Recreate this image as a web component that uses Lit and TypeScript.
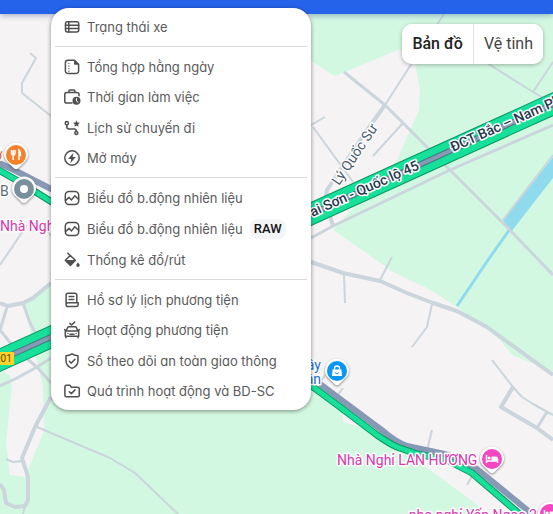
import { LitElement, html, css, svg } from "lit";
import { customElement, state } from "lit/decorators.js";
import { classMap } from "lit/directives/class-map.js";

type Item = { icon: string; label: string; badge?: string; tall?: boolean };

const GROUPS: Item[][] = [
  [{ icon: "table", label: "Trạng thái xe" }],
  [
    { icon: "report", label: "Tổng hợp hằng ngày" },
    { icon: "work", label: "Thời gian làm việc" },
    { icon: "route", label: "Lịch sử chuyến đi", tall: true },
    { icon: "engine", label: "Mở máy" },
  ],
  [
    { icon: "chart", label: "Biểu đồ b.động nhiên liệu" },
    { icon: "chart", label: "Biểu đồ b.động nhiên liệu", badge: "RAW" },
    { icon: "fill", label: "Thống kê đổ/rút" },
  ],
  [
    { icon: "profile", label: "Hồ sơ lý lịch phương tiện" },
    { icon: "car", label: "Hoạt động phương tiện" },
    { icon: "shield", label: "Sổ theo dõi an toàn giao thông", tall: true },
    { icon: "folder", label: "Quá trình hoạt động và BD-SC" },
  ],
];

const ICONS: Record<string, unknown> = {
  table: svg`<rect x="1.5" y="2.7" width="13.2" height="10.4" rx="2"/><path d="M1.5 6.2h13.2M1.5 9.6h13.2M4.8 2.7v10.4"/>`,
  report: svg`<path d="M10.5 1.2H4a2.600 2.600 0 0 0-2.600 2.600v8.200A2.600 2.600 0 0 0 4 14.600h8a2.600 2.600 0 0 0 2.600-2.600V5.200z"/><path class="solid" d="M10 1v3.400c0 .8.5 1.300 1.300 1.300h3.400z"/><path d="M4.900 4.300v8" stroke-width="1.200" stroke-dasharray=".2 2.400"/>`,
  work: svg`<path d="M8 14.1H2.6A1.8 1.8 0 0 1 .8 12.3V5.4a1.8 1.8 0 0 1 1.8-1.8h10.600A1.8 1.8 0 0 1 15 5.400v1.400M5 3.500V1.800c0-.5.3-.9.9-.9h4c.6 0 .9.4.9.9v1.700"/><circle class="solid" cx="12.500" cy="11.800" r="4"/><path class="cut" d="M12.400 9.500v2.600l1.700 1.200"/>`,
  route: svg`<circle cx="2.8" cy="3.2" r="1.6"/><circle cx="12.3" cy="13.1" r="1.5"/><path d="M2.8 4.9v1.900c0 1.500.8 2.100 2.200 2.100h5.200c1.400 0 2.100.7 2.100 2.500"/><path class="solid" d="m12.500.3 1 2.200 2.400.3-1.800 1.600.5 2.400-2.100-1.200-2.100 1.200.5-2.400-1.800-1.600 2.400-.3z"/>`,
  engine: svg`<circle cx="8" cy="8" r="7.2"/><path class="solid" d="M9.4 2.8 4.2 8.900h3l-.8 4.300 5.300-6.300H8.600z"/>`,
  chart: svg`<rect x="1.3" y="1.5" width="13.4" height="13" rx="3.7"/><path d="m1.700 10.400 3.400-3 2.400 2.500 3.300-4.200 3.700 3.500"/>`,
  fill: svg`<path d="m3.800 1.200 7.600 7.100-5 5.100-5.100-5.100 5-4.800"/><path class="solid" d="M1.300 8.100h10.300l-5.200 5.600zM14 10.600s-1.700 1.500-1.700 2.700a1.700 1.700 0 0 0 3.400 0c0-1.200-1.700-2.700-1.700-2.700z"/>`,
  profile: svg`<path d="M4.500 10.800h9.700v1.500a2.300 2.300 0 0 1-2.300 2.300H4.300A2.200 2.200 0 0 1 2.100 12.400V3.200C2.100 2 3 1.200 4.200 1.200h6.500c1.300 0 2.100.8 2.100 2v7.600M2.100 12.200c0-.9.9-1.400 2.400-1.400M5.100 4.500h4.700M5.100 7.600h4.700"/>`,
  car: svg`<path d="m5.900 1.400 1.700 1.600L10.700.1M2 9l1.500-3.300c.3-.7.7-1 1.500-1h6c.8 0 1.200.3 1.500 1L14 9M1.300 9h13.400v5.300H1.300zM1.900 14.300v1.500M14.100 14.300v1.500M.6 7.600l1.400 1M15.400 7.600l-1.400 1M6 12.300h4"/><circle class="solid" cx="3.900" cy="11.400" r=".7"/><circle class="solid" cx="12.100" cy="11.400" r=".7"/>`,
  shield: svg`<path d="M8 .8c1.800 1.300 3.900 1.900 6 1.900v5c0 4-2.600 6.300-6 7.700-3.400-1.400-6-3.700-6-7.700v-5c2.100 0 4.200-.6 6-1.900z"/><path d="m5.300 8.200 2 1.900L11 6.300"/>`,
  folder: svg`<path d="M.9 12.300V3.700c0-.9.5-1.500 1.500-1.500h3.400l1.700 2h6.200c1 0 1.600.6 1.600 1.500v6.600c0 1-.6 1.500-1.600 1.500H2.400c-1 0-1.500-.5-1.500-1.500z"/><path d="m5.300 8.700 2 1.900 3.700-3.700"/>`,
};

@customElement("menu-icon")
class MenuIcon extends LitElement {
  static properties = { name: { type: String } };
  declare name: string;
  static styles = css`
    :host { display: block; flex: none; width: 16px; height: 16px; }
    svg { display: block; width: 16px; height: 16px; overflow: visible; fill: none; stroke: #4f4f4f; stroke-width: 1.5; stroke-linecap: round; stroke-linejoin: round; }
    .solid { fill: #4f4f4f; stroke: none; }
    .cut { stroke: #fff; stroke-width: 1; }
  `;
  render() {
    return html`<svg viewBox="0 0 16 16" aria-hidden="true">${ICONS[this.name]}</svg>`;
  }
}

@customElement("report-menu")
class ReportMenu extends LitElement {
  static styles = css`
    :host { display: block; box-sizing: border-box; width: 260px; padding: 4px; border-radius: 18px; background: #fff; box-shadow: 0 1px 4px rgba(0, 0, 0, 0.45); }
    ul { list-style: none; margin: 0; padding: 0; }
    .group + .group { margin-top: 4px; padding-top: 5px; border-top: 1px solid #d9d9dc; }
    .item { display: flex; align-items: center; gap: 7px; width: 100%; height: 30px; margin: 0; padding: 0 9px; border: 0; border-radius: 8px; background: none; color: #5a5a5a; font: 400 13px/20px Inter, "Noto Sans", sans-serif; font-feature-settings: "cv11", "ss03"; text-align: left; white-space: nowrap; cursor: pointer; }
    .item:hover { background: #f3f4f6; }
    .tall { height: 31px; }
    .badged { height: 32px; }
    .badge { padding: 0 4px; border-radius: 8px; background: #f3f4f6; color: #111; font: 500 13px/20px Roboto, sans-serif; }
  `;
  render() {
    return html`<nav aria-label="Báo cáo">
      ${GROUPS.map(
        (group) => html`<ul class="group">
          ${group.map(
            (i) => html`<li>
              <button class=${classMap({ item: true, tall: !!i.tall, badged: !!i.badge })}>
                <menu-icon .name=${i.icon}></menu-icon><span>${i.label}</span>${i.badge ? html`<span class="badge">${i.badge}</span>` : null}
              </button>
            </li>`
          )}
        </ul>`
      )}
    </nav>`;
  }
}

const pin = (x: number, y: number, color: string, glyph: unknown) => svg`
  <g transform="translate(${x} ${y})">
    <path class="pin" d="M0-12.500a12 12 0 0 1 12 12C12 6 6 8.500 2.500 13Q0 15.500-2.500 13C-6 8.500-12 6-12-.5a12 12 0 0 1 12-12z"/>
    <circle r="10" fill=${color}/>${glyph}
  </g>`;

const bed = svg`<path d="M-5.500-4v8M-5.500 2h11M5.500 4V0" fill="none" stroke="#fff" stroke-width="1.500"/><circle cx="-2.900" cy="-.9" r="1.500" fill="#fff"/><path d="M-.5-2.500h4.500a2 2 0 0 1 2 2V2H-.5z" fill="#fff"/>`;

@customElement("street-map")
class StreetMap extends LitElement {
  static styles = css`
    :host { display: block; overflow: hidden; }
    svg { display: block; width: 100%; height: 100%; }
    .land { fill: #f5f3f4; }
    .park { fill: #d3f8e2; }
    .water { fill: #90daee; }
    .stream { fill: none; stroke: #90daee; stroke-width: 3; }
    .road { fill: none; stroke: #cad5dc; stroke-linejoin: round; }
    .w2 { stroke-width: 2; }
    .w3 { stroke-width: 3; }
    .w4 { stroke-width: 4; }
    .edge, .flow, .median, .lane { fill: none; stroke-linejoin: round; }
    .edge { stroke: #0a9963; }
    .flow { stroke: #16e09a; }
    .median { stroke: #3f7f82; stroke-width: 6; }
    .lane { stroke: #8799b4; }
    .pin { fill: #fff; filter: drop-shadow(0 1px 1px rgba(0, 0, 0, 0.45)); }
    text { font: 400 14px Roboto, sans-serif; paint-order: stroke; stroke: #fff; stroke-width: 3px; stroke-linejoin: round; }
    .highway { font-weight: 500; fill: #26384e; }
    .street { fill: #48596a; }
    .hotel { fill: #d936ad; }
    .shop { fill: #1a6dd8; }
    .food { fill: #d8641c; }
    .place { fill: #5c6c79; }
    .route { font-size: 10px; fill: #5c4500; stroke: none; }
  `;
  render() {
    return html`<svg viewBox="0 0 553 514" preserveAspectRatio="xMinYMin slice" role="img" aria-label="Bản đồ">
      <rect class="land" width="553" height="514"/>
      <path class="park" d="M311 0H553V372L512 355 500 340 457 307 427 288 393 272 362 250 333 230 397 160 419 110 420 90 415 63 400 49 335 76 311 61z"/>
      <path class="park" d="M0 370 10 375 12 385 6 443 10 475 25 477 44 431 43 387 33 343 24 303 51 283 311 380 343 407V422L380 433 430 470 490 514H0z"/>
      <path class="water" d="M553 157 503 220 511 232 553 178z"/>
      <path class="road w2" d="M553 155 503 220"/>
      <path class="stream" d="M510 229 488 260 457 306"/>
      <path class="road w2" d="M30 53 36 58 22 83V93L51 116M27 225 0 265M45 227 51 236M444 14 412 63 385 105M403 123 373 156M311 125 325 117M313 127 353 182M487 63 533 92 553 104M533 92 553 62M344 274 345 303M392 257 380 280M432 304 427 327 412 347M492 360 513 387 522 397 533 404 553 415M432 430 427 451M343 388 337 396M472 476 467 485M325 375 320 383M6 459 13 462 22 461M37 427 110 458 135 473 178 514M25 506 23 514"/>
      <path class="road w3" d="M344 72 385 105 403 123 450 170 507 227 553 275M311 238 333 226 450 170 553 125M501 407 513 387M537 428 547 412M0 386 17 378 37 367 51 358M7 307 0 330 16 350 37 367 51 383M23 303 30 323 36 334"/>
      <path class="road w4" d="M385 105 367 130 327 190 325 200 333 226M0 303 8 306 23 303 33 298 51 283M51 397 35 427 22 458 28 477V500L25 506 15 507 6 503 4 490 0 484M311 262 343 273 380 281 407 293 433 303 457 311 487 327 553 375M513 387 501 407 537 428 553 440"/>

      <path class="edge" stroke-width="22" d="M-9 364 51 337 311 214 562 100"/>
      <path class="flow" stroke-width="20" d="M-9 364 51 337 311 214 562 100"/>
      <path class="median" d="M-9 364 51 337 311 214 562 100"/>
      <path class="lane" stroke-width="4" d="M-9 364 51 337 311 214 562 100"/>

      <path class="lane" stroke-width="6" d="M-3 162 20 173 55 191M320 384 340 399 383 431Q396 442 407 446L440 453Q450 455 457 458L477 469 532 514"/>
      <path class="edge" stroke-width="7" d="M-3 169 18 181 55 204M309 384 340 407 377 435Q390 444 397 447L417 454 447 460 472 473 522 516"/>
      <path class="flow" stroke-width="5" d="M-3 169 18 181 55 204M309 384 340 407 377 435Q390 444 397 447L417 454 447 460 472 473 522 516"/>

      <rect x="-8" y="352" width="22" height="13" rx="1" fill="#ffd428"/>
      <text class="route" x="-5" y="362">901</text>
      <text class="street" transform="translate(339 186) rotate(-56)">Lý Quốc Sư</text>
      <text class="highway" text-anchor="end" transform="translate(420 169) rotate(-24)">ai Sơn - Quốc lộ 45</text>
      <text class="highway" transform="translate(453 152) rotate(-24)">ĐCT Bắc – Nam Ph</text>
      <text class="hotel" x="0" y="231">Nhà Nghỉ</text>
      <text class="place" x="0" y="196">B</text>
      <text class="food" x="-6" y="160">ở</text>
      <text class="shop" text-anchor="end" x="321" y="370">ây</text>
      <text class="shop" text-anchor="end" x="321" y="384">ân</text>
      <text class="hotel" x="337" y="465">Nhà Nghỉ LAN HƯƠNG</text>
      <text class="hotel" text-anchor="end" x="537" y="520">nho nghỉ Yến Ngọc 2</text>
      ${pin(16, 155, "#f6832b", svg`<path d="M-4.500-5v3.500q0 1.500 1.700 1.500T-1-1.500V-5M-2.800-5V5M3 5V-5Q5-3 4.500.5H3" fill="none" stroke="#fff" stroke-width="1.500"/>`)}
      ${pin(24, 189, "#78909c", svg`<circle r="4" fill="#fff"/>`)}
      ${pin(337, 371, "#0b96f5", svg`<path d="M-4.500-1.500h9L5 5H-5z" fill="#fff"/><path d="M-2.500-1v-1.500a2.500 2.500 0 0 1 5 0V-1" fill="none" stroke="#fff" stroke-width="1.300"/><path d="M-2 1.500Q0 4 2 1.500" fill="none" stroke="#0b96f5"/>`)}
      ${pin(492, 459, "#f545c0", bed)}
      ${pin(550, 514, "#f545c0", bed)}
    </svg>`;
  }
}

@customElement("app-root")
class AppRoot extends LitElement {
  static styles = css`
    :host { display: block; position: relative; height: 100vh; overflow: hidden; }
    .page { display: flex; flex-direction: column; height: 100%; }
    .bar { flex: none; height: 14px; background: #2563eb; box-shadow: 0 1px 6px rgba(37, 70, 130, 0.45); z-index: 1; }
    .map { flex: 1; min-height: 0; margin-top: -14px; }
    .menu { position: absolute; top: 8px; left: 51px; z-index: 2; }
    .types { position: absolute; top: 24px; right: 10px; display: flex; border-radius: 10px; overflow: hidden; background: #fff; box-shadow: 0 1px 4px rgba(0, 0, 0, 0.3); }
    .type { height: 40px; margin: 0; padding: 0 10px; border: 0; background: #fff; color: #444; font: 400 16px/24px Roboto, sans-serif; cursor: pointer; }
    .type + .type { border-left: 1px solid #e4e4e4; }
    .type.on { font-weight: 500; color: #222; }
  `;
  @state() private kind = "Bản đồ";
  render() {
    return html`<div class="page">
        <header class="bar"></header>
        <street-map class="map"></street-map>
      </div>
      <div class="types">
        ${["Bản đồ", "Vệ tinh"].map(
          (k) => html`<button class=${classMap({ type: true, on: k === this.kind })} aria-pressed=${k === this.kind} @click=${() => (this.kind = k)}>${k}</button>`
        )}
      </div>
      <report-menu class="menu"></report-menu>`;
  }
}
